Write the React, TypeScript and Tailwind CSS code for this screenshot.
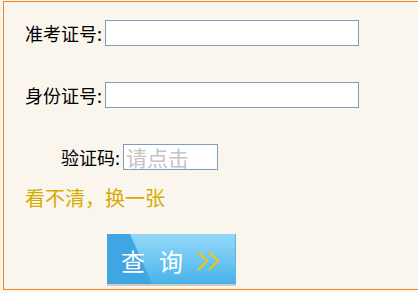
export default function App() {
  return (
    <div className="w-[418px] h-[293px] bg-[#faf6ee] font-['Noto_Sans_CJK_SC',sans-serif] overflow-hidden">
      <div className="ml-[3px] pt-[1px]">
        <div className="w-[415px] h-[289px] border-solid border-l border-t border-b border-l-[#f7851c] border-t-[#f7851c] border-b-[#f7851c] bg-[#faf6ee] flex flex-col">
          <div className="flex items-center pl-[21px] mt-[18px]">
            <span className="text-[18px] leading-[26px] text-black">准考证号:</span>
            <div className="ml-[3px] w-[254px] h-[26px] border border-[#7f9db9] bg-white" />
          </div>
          <div className="flex items-center pl-[21px] mt-[36px]">
            <span className="text-[18px] leading-[26px] text-black">身份证号:</span>
            <div className="ml-[3px] w-[254px] h-[26px] border border-[#7f9db9] bg-white" />
          </div>
          <div className="flex items-center pl-[57px] mt-[36px]">
            <span className="text-[18px] leading-[26px] text-black">验证码:</span>
            <div className="ml-[3px] w-[95px] h-[26px] border border-[#7f9db9] bg-white flex items-center pl-[2px]">
              <span className="text-[21px] leading-[22px] text-[#c4c4c4]">请点击</span>
            </div>
          </div>
          <div className="pl-[21px] mt-[18px] text-[20px] leading-[20px] text-[#d6ab04]">看不清，换一张</div>
          <div className="ml-[103px] mt-[26px] w-[129px]">
            <div className="relative h-[50px] overflow-hidden bg-gradient-to-b from-[#93daf8] to-[#47b2eb] border-r border-[#5cb6e4]">
              <svg className="absolute inset-0" width="129" height="50" viewBox="0 0 129 50">
                <polygon points="0,0 23,0 45,50 0,50" fill="#3fa6e3" />
              </svg>
              <div className="relative flex items-center h-full pl-[14px] pt-[4px]">
                <span className="text-[24px] leading-[24px] text-white">查</span>
                <span className="ml-[14px] text-[24px] leading-[24px] text-white">询</span>
                <svg className="ml-[14px]" width="23" height="20" viewBox="0 0 23 20">
                  <polyline points="1,1 10,10 1,19" fill="none" stroke="#f3c600" strokeWidth="2" />
                  <polyline points="12,1 21,10 12,19" fill="none" stroke="#f3c600" strokeWidth="2" />
                </svg>
              </div>
            </div>
            <div className="h-[2px] bg-[#d6cbb0]" />
          </div>
        </div>
      </div>
    </div>
  );
}
